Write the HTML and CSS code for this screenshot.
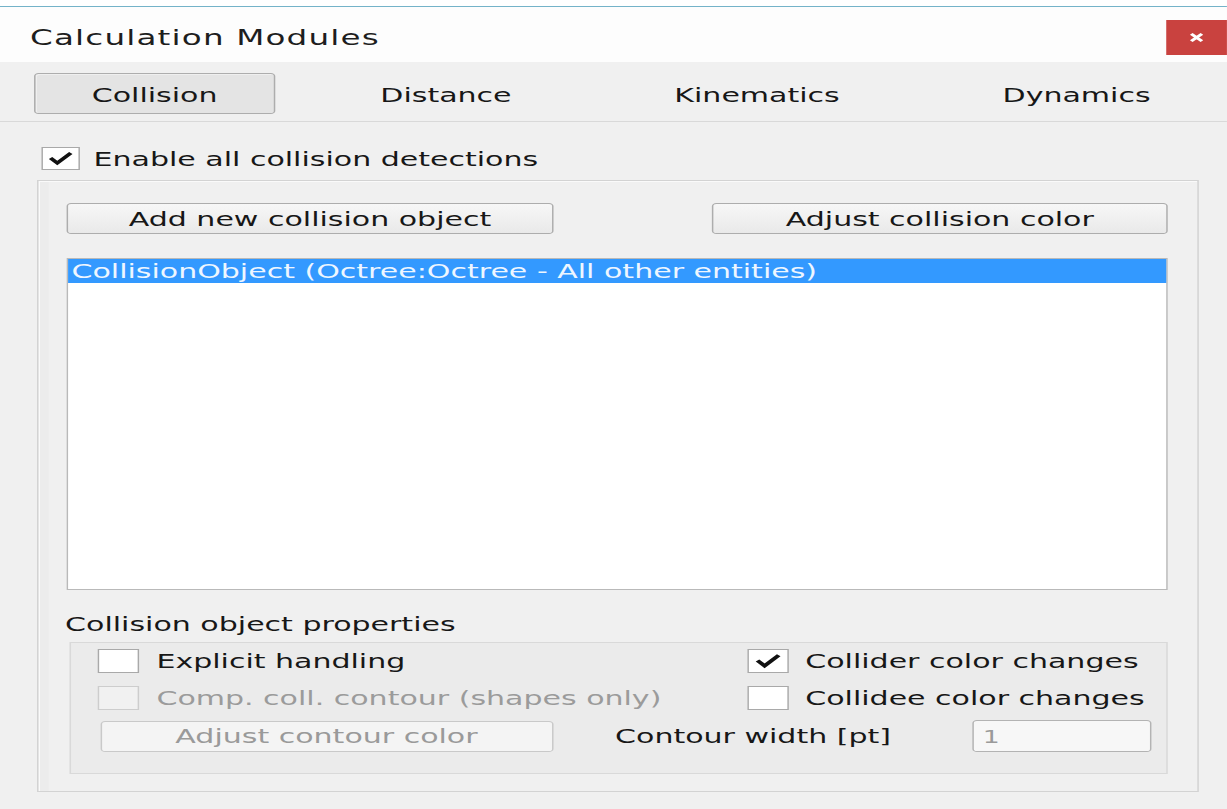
FILE: index.html
```html
<!DOCTYPE html>
<html lang="en">
<head>
<meta charset="utf-8">
<title>Calculation Modules</title>
<link rel="stylesheet" href="styles.css">
</head>
<body>
<div class="dialog">
  <div class="screen-edge"></div>
  <header class="titlebar">
    <span class="title">Calculation Modules</span>
    <button class="close" type="button" aria-label="Close">
      <svg viewBox="0 0 10 10" width="9" height="9"><path d="M1 1 L9 9 M9 1 L1 9" stroke="#fff" stroke-width="2.8" fill="none"/></svg>
    </button>
  </header>

  <nav class="tabbar">
    <div class="tab active">Collision</div>
    <div class="tab">Distance</div>
    <div class="tab">Kinematics</div>
    <div class="tab">Dynamics</div>
  </nav>

  <main class="page">
    <label class="check enable">
      <span class="box">
        <svg viewBox="0 0 26 23" class="tick"><path d="M5.5 11 L10.5 16.5 L20.5 5.5" /></svg>
      </span>
      Enable all collision detections
    </label>

    <section class="frame">
      <div class="btn-row">
        <button class="btn add" type="button">Add new collision object</button>
        <button class="btn adjust" type="button">Adjust collision color</button>
      </div>

      <ul class="list">
        <li class="selected">CollisionObject (Octree:Octree - All other entities)</li>
      </ul>

      <div class="group-title">Collision object properties</div>

      <div class="props">
        <div class="prop-row">
          <label class="check left"><span class="box"></span>Explicit handling</label>
          <label class="check"><span class="box"><svg viewBox="0 0 26 23" class="tick"><path d="M5.5 11 L10.5 16.5 L20.5 5.5" /></svg></span>Collider color changes</label>
        </div>
        <div class="prop-row second">
          <label class="check left disabled"><span class="box"></span>Comp. coll. contour (shapes only)</label>
          <label class="check"><span class="box"></span>Collidee color changes</label>
        </div>
        <div class="prop-row third">
          <button class="btn contour" type="button" disabled>Adjust contour color</button>
          <span class="field-label">Contour width [pt]</span>
          <input class="spin" type="text" value="1" disabled>
        </div>
      </div>
    </section>
  </main>
</div>
</body>
</html>
```

FILE: styles.css
```css
html, body {
  margin: 0;
  height: 809px;
  overflow: hidden;
  background: #f0f0f0;
}

.dialog {
  width: 829px;
  transform: scaleX(1.48);
  transform-origin: 0 0;
  font-family: "DejaVu Sans", Verdana, sans-serif;
  font-size: 20.3px;
  color: #171717;
}

/* thin strip of the screen above the window frame */
.screen-edge {
  height: 6px;
  background: #ffffff;
  border-bottom: 1px solid #74b3c9;
}

/* ---------- title bar ---------- */
.titlebar {
  height: 55px;
  background: #fdfdfd;
  display: flex;
  align-items: flex-start;
}

.title {
  margin: 19px 0 0 20.3px;
  line-height: 24px;
  font-size: 22px;
  letter-spacing: 0.8px;
  color: #1e1e1e;
}

.close {
  margin: 13px 0 0 auto;
  width: 41.2px;
  height: 35px;
  padding: 0;
  border: none;
  background: #c9423f;
  display: flex;
  align-items: center;
  justify-content: center;
}

/* ---------- tabs ---------- */
.tabbar {
  height: 60px;
  box-sizing: border-box;
  border-bottom: 1px solid #d9d9d9;
  padding: 11px 13px 0 23px;
  display: flex;
  align-items: flex-start;
  gap: 32px;
}

.tab {
  height: 41px;
  box-sizing: border-box;
  padding: 0 38px;
  line-height: 43px;
  border: 1px solid transparent;
  border-radius: 3px;
  white-space: nowrap;
}

.tab.active {
  background: #e4e4e4;
  border-color: #adadad;
  box-shadow: inset 1px 1px 0 #efefef;
}

/* ---------- page ---------- */
.page {
  padding: 25px 0 0 25px;
}

.check {
  display: flex;
  align-items: center;
  gap: 11.4px;
  white-space: nowrap;
}

.box {
  flex: none;
  width: 28px;
  height: 24px;
  box-sizing: border-box;
  border: 1px solid #a9a9a9;
  background: #ffffff;
  display: block;
}

.tick {
  display: block;
  width: 100%;
  height: 100%;
}

.tick path {
  fill: none;
  stroke: #111111;
  stroke-width: 3.4;
}

.enable {
  height: 23px;
  margin-left: 3.4px;
  gap: 8.8px;
}

.enable .box {
  width: 26px;
  height: 23px;
}

.frame {
  margin-top: 10px;
  width: 785px;
  height: 612px;
  box-sizing: border-box;
  border: 1px solid #d3d3d3;
  box-shadow: inset 1px 1px 0 #fafafa, inset 7px 0 0 #ececec;
  padding: 22px 20px 0 19.3px;
}

.btn-row {
  display: flex;
  justify-content: space-between;
}

.btn {
  height: 31px;
  box-sizing: border-box;
  border: 1px solid #adadad;
  border-radius: 3px;
  background: linear-gradient(#f7f7f7, #e9e9e9);
  font: inherit;
  color: inherit;
  padding: 0;
  white-space: nowrap;
}

.btn.add { width: 328.3px; }
.btn.adjust { width: 308px; }

.list {
  list-style: none;
  margin: 24px 0 0;
  padding: 0;
  height: 332px;
  box-sizing: border-box;
  border: 1px solid #b9b9b9;
  background: #ffffff;
}

.list li {
  height: 24px;
  line-height: 24px;
  padding-left: 2px;
  white-space: nowrap;
}

.list li.selected {
  background: #3399ff;
  color: #eef6ff;
}

.group-title {
  margin: 22px 0 0 -1.3px;
  line-height: 24px;
}

.props {
  margin: 6px 0 0 2px;
  height: 132px;
  box-sizing: border-box;
  border: 1px solid #d9d9d9;
  background: #ebebeb;
  padding: 6px 10px 0 18px;
}

.prop-row {
  display: flex;
  align-items: center;
  height: 24px;
}

.prop-row.second { margin-top: 13px; }

.prop-row.third {
  margin-top: 10px;
  height: 32px;
}

.check.left { width: 438.4px; }

.check.disabled { color: #9b9b9b; }

.check.disabled .box {
  background: #f1f1f1;
  border-color: #cdcdcd;
}

.btn.contour {
  width: 306px;
  margin-left: 1.3px;
  color: #9a9a9a;
  background: #f4f4f4;
  border-color: #c9c9c9;
}

.field-label {
  margin-left: 42px;
  white-space: nowrap;
}

.spin {
  margin-left: auto;
  width: 121px;
  height: 32px;
  box-sizing: border-box;
  border: 1px solid #b3b3b3;
  border-radius: 3px;
  background: #f7f7f7;
  color: #9a9a9a;
  font: inherit;
  font-size: 18px;
  padding: 0 0 0 6px;
}
```
